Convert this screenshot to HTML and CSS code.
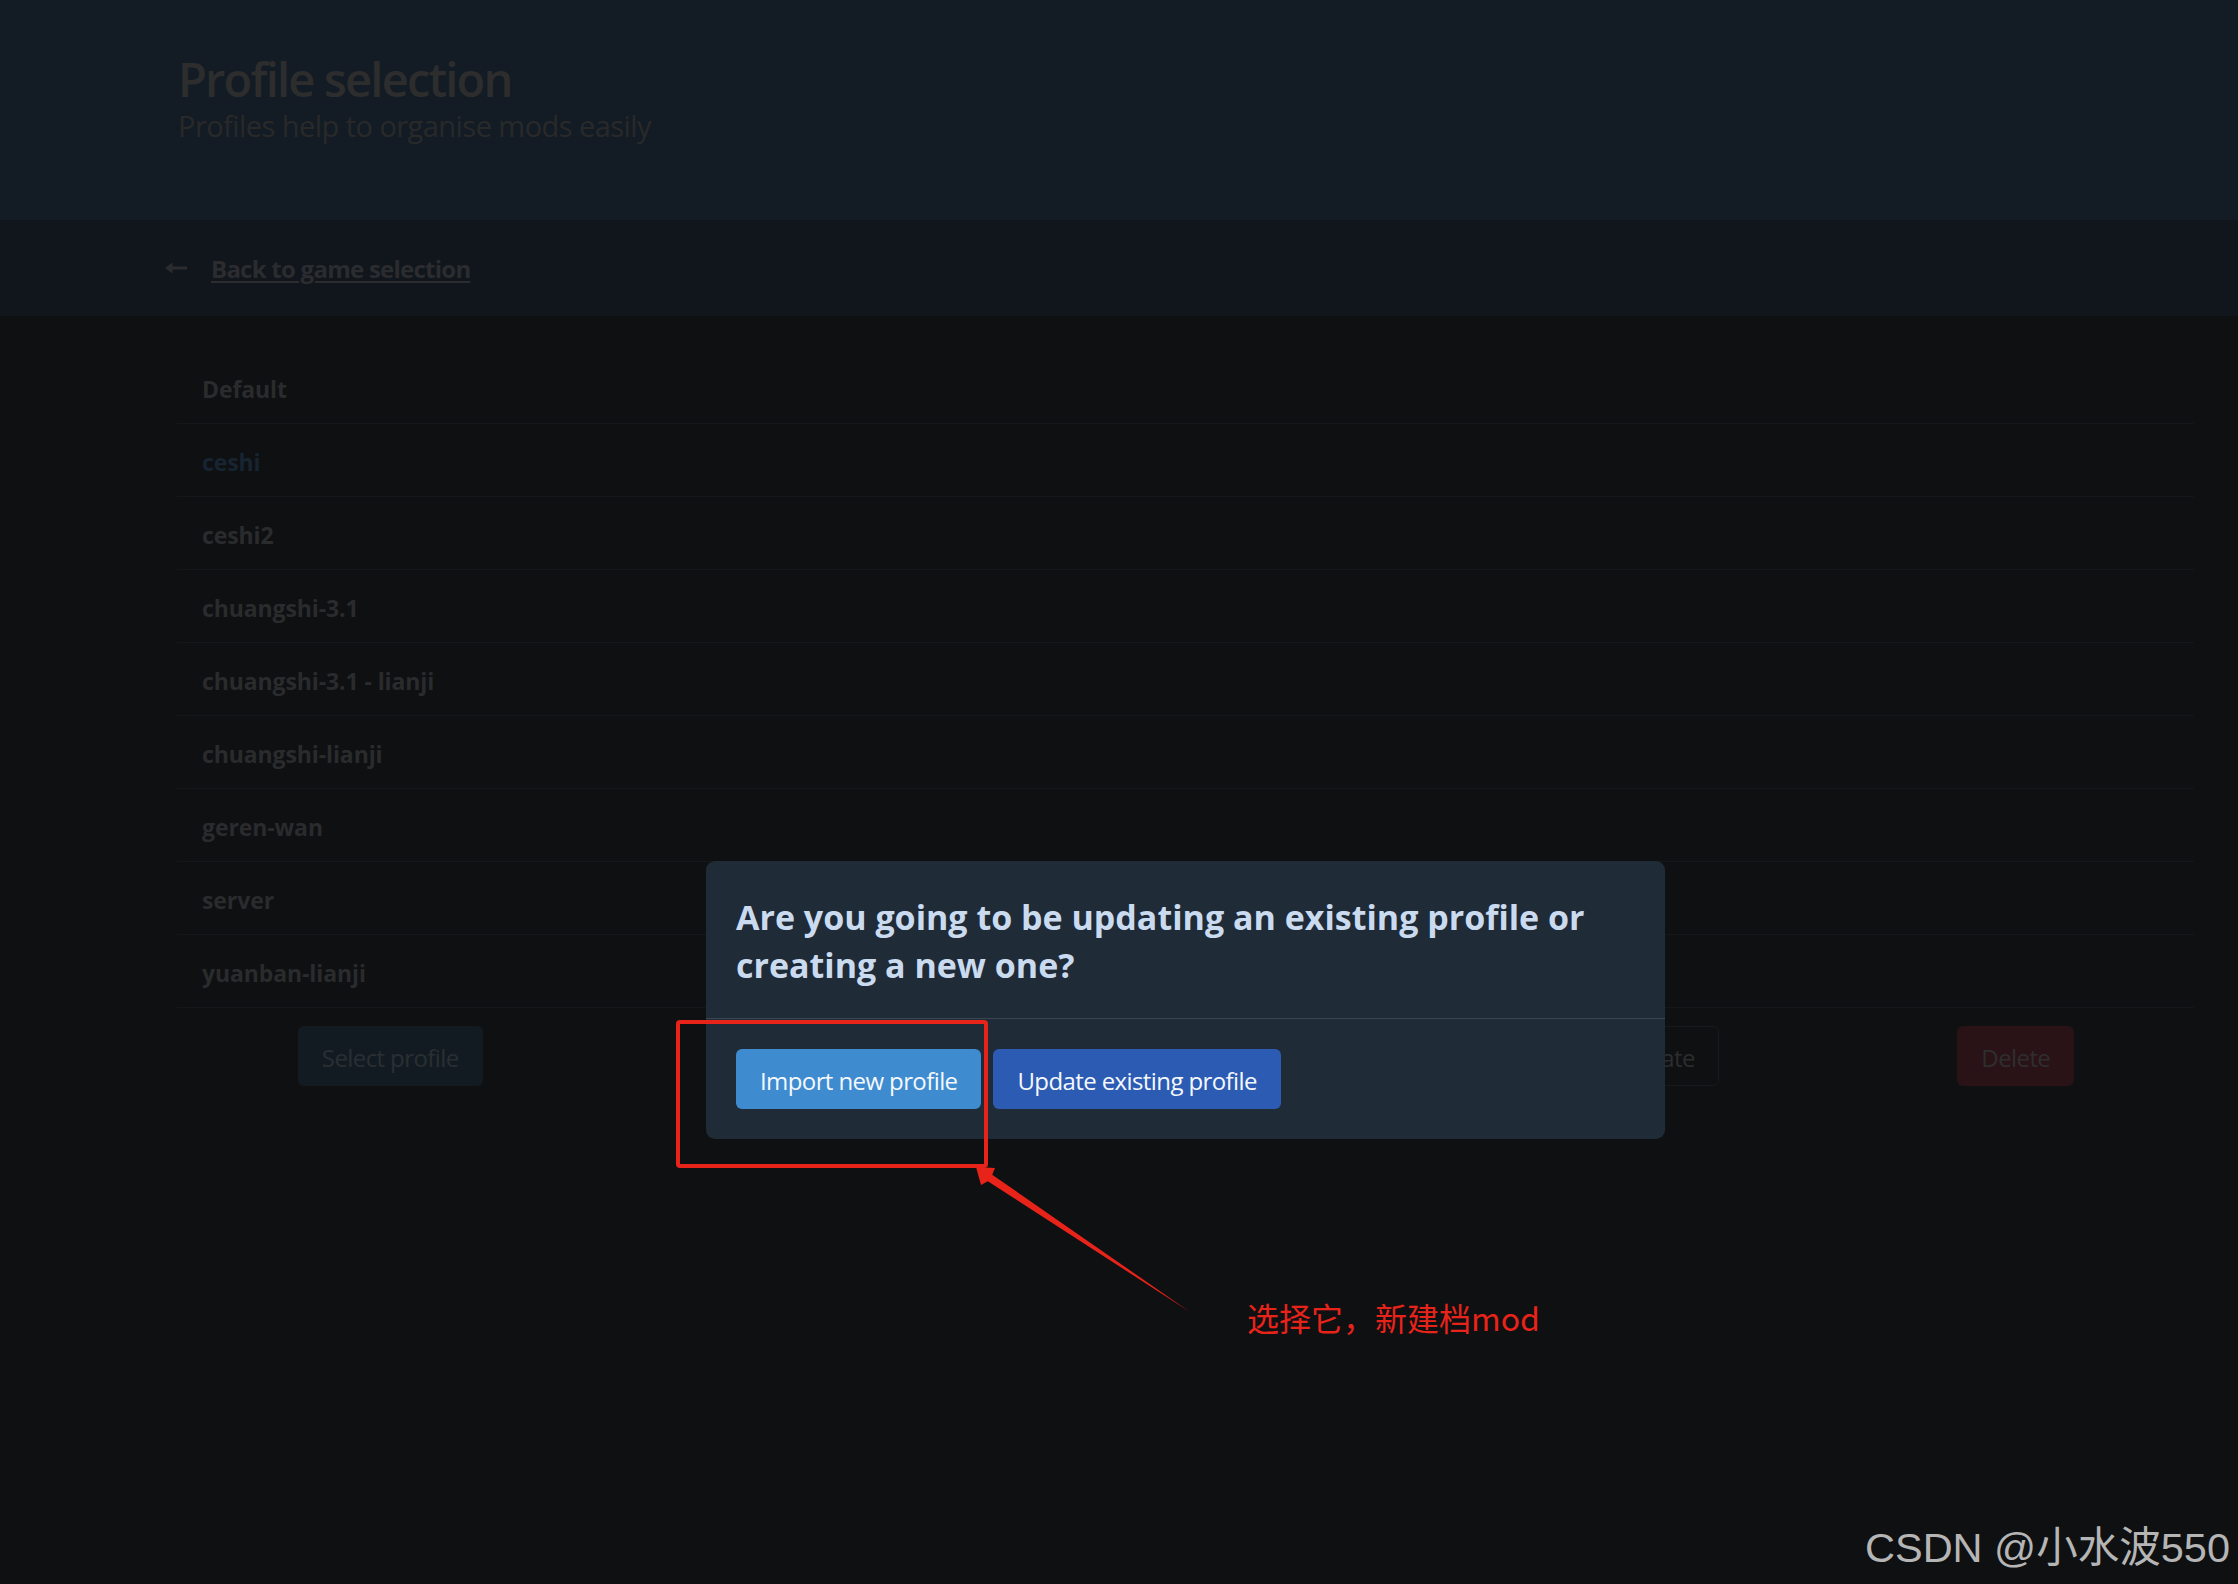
FILE: index.html
```html
<!DOCTYPE html>
<html lang="en">
<head>
<meta charset="utf-8">
<title>Profile selection</title>
<link rel="stylesheet" href="styles.css">
</head>
<body>
<div class="app">
  <section class="hero">
    <h1 class="title">Profile selection</h1>
    <p class="subtitle">Profiles help to organise mods easily</p>
  </section>
  <nav class="backbar">
    <svg class="back-arrow" width="22" height="12" viewBox="0 0 22 12"><path d="M0 6 L7.5 0.5 L7.5 4.5 L22 4.5 L22 7.5 L7.5 7.5 L7.5 11.5 Z" fill="#2a2c30"/></svg>
    <a class="back-link" href="#">Back to game selection</a>
  </nav>
  <main class="main">
    <ul class="profiles">
      <li class="profile">Default</li>
      <li class="profile is-selected">ceshi</li>
      <li class="profile">ceshi2</li>
      <li class="profile">chuangshi-3.1</li>
      <li class="profile">chuangshi-3.1 - lianji</li>
      <li class="profile">chuangshi-lianji</li>
      <li class="profile">geren-wan</li>
      <li class="profile">server</li>
      <li class="profile">yuanban-lianji</li>
    </ul>
    <div class="actions">
      <div class="action action-select"><button class="btn btn-select">Select profile</button></div>
      <div class="action action-import"><button class="btn btn-plain">Import / Update</button></div>
      <div class="action action-delete"><button class="btn btn-danger">Delete</button></div>
    </div>
  </main>

  <div class="overlay">
    <div class="modal">
      <div class="modal-head">
        <p class="modal-title">Are you going to be updating an existing profile or creating a new one?</p>
      </div>
      <div class="modal-foot">
        <button class="btn btn-info">Import new profile</button>
        <button class="btn btn-primary">Update existing profile</button>
      </div>
    </div>
    <div class="annot-box"></div>
    <svg class="annot-arrow" width="2238" height="1584" viewBox="0 0 2238 1584">
      <polygon points="976,1167 995,1168 992.2,1174.7 1190,1312 987.8,1181.3 981,1185" fill="#e8231a"/>
    </svg>
    <div class="annot-text">选择它，新建档mod</div>
    <div class="watermark">CSDN @小水波550</div>
  </div>
</div>
</body>
</html>
```

FILE: styles.css
```css
html, body {
  margin: 0;
  padding: 0;
  background: #0f1012;
}

.app {
  position: relative;
  width: 2238px;
  height: 1584px;
  overflow: hidden;
  background: #0f1012;
  font-family: "Open Sans", "Noto Sans", sans-serif;
}

/* Hero header */
.hero {
  height: 220px;
  box-sizing: border-box;
  padding: 52px 0 0 178px;
  background: #131c24;
}

.title {
  margin: 0;
  font-size: 47px;
  line-height: 54px;
  font-weight: 600;
  letter-spacing: -1.8px;
  color: #2d2d2e;
}

.subtitle {
  margin: 2px 0 0;
  font-size: 29px;
  line-height: 36px;
  font-weight: 400;
  letter-spacing: -0.55px;
  color: #29292a;
}

/* Back bar */
.backbar {
  height: 96px;
  box-sizing: border-box;
  padding: 2px 0 0 165px;
  display: flex;
  align-items: center;
  gap: 24px;
  background: #11161c;
}

.back-arrow {
  display: block;
  flex: none;
  margin-top: -2px;
}

.back-link {
  font-size: 24px;
  line-height: 36px;
  font-weight: 700;
  letter-spacing: -0.75px;
  color: #2b2c2f;
  text-decoration: underline;
  text-decoration-thickness: 2px;
  text-underline-offset: 3px;
}

/* Main */
.main {
  padding-top: 35px;
}

.profiles {
  list-style: none;
  margin: 0 44px 0 177px;
  padding: 0;
}

.profile {
  padding: 20px 25px 16px;
  font-size: 23px;
  line-height: 36px;
  font-weight: 700;
  letter-spacing: -0.1px;
  color: #2a2b2d;
  border-bottom: 1px solid #15171a;
}

.profile.is-selected {
  color: #172431;
}

.actions {
  margin: 18px 19px 0 187px;
  display: grid;
  grid-template-columns: repeat(5, 1fr);
  justify-items: center;
}

.action-select { grid-column: 1; }
.action-import { grid-column: 4; }
.action-delete { grid-column: 5; }

.btn {
  height: 60px;
  box-sizing: border-box;
  padding: 4px 23px 0;
  border: 1px solid transparent;
  border-radius: 6px;
  font-family: "Open Sans", "Noto Sans", sans-serif;
  font-size: 24px;
  line-height: 36px;
  font-weight: 400;
  letter-spacing: -0.6px;
  white-space: nowrap;
  cursor: pointer;
}

.btn-select {
  background: #131b22;
  color: #2a2f33;
}

.btn-plain {
  background: transparent;
  border-color: #17191c;
  color: #2d2d2e;
}

.btn-danger {
  background: #2a1316;
  color: #2e2e2f;
}

/* Modal overlay */
.overlay {
  position: absolute;
  inset: 0;
}

.modal {
  position: absolute;
  left: 706px;
  top: 861px;
  width: 959px;
  border-radius: 9px;
  background: #202b38;
  overflow: hidden;
}

.modal-head {
  padding: 33px 30px 29px;
  border-bottom: 1px solid #3a4552;
}

.modal-title {
  margin: 0;
  font-size: 34px;
  line-height: 47.5px;
  font-weight: 700;
  color: #cadbef;
}

.modal-foot {
  padding: 30px;
  display: flex;
  gap: 12px;
}

.btn-info {
  background: #3e8ccf;
  color: #f4f8fc;
}

.btn-primary {
  background: #2c5bb4;
  color: #f4f8fc;
}

/* Annotation */
.annot-box {
  position: absolute;
  left: 676px;
  top: 1020px;
  width: 312px;
  height: 148px;
  box-sizing: border-box;
  border: 4px solid #e8231a;
  border-radius: 4px;
}

.annot-arrow {
  position: absolute;
  left: 0;
  top: 0;
}

.annot-text {
  position: absolute;
  left: 1247px;
  top: 1294px;
  font-family: "Noto Sans CJK SC", sans-serif;
  font-size: 32px;
  line-height: 46px;
  color: #e8231a;
  white-space: nowrap;
}

.watermark {
  position: absolute;
  left: 1865px;
  top: 1523px;
  font-family: "Liberation Sans", "Noto Sans CJK SC", sans-serif;
  font-size: 41.5px;
  line-height: 50px;
  color: #b5b5b5;
  white-space: nowrap;
}
```
